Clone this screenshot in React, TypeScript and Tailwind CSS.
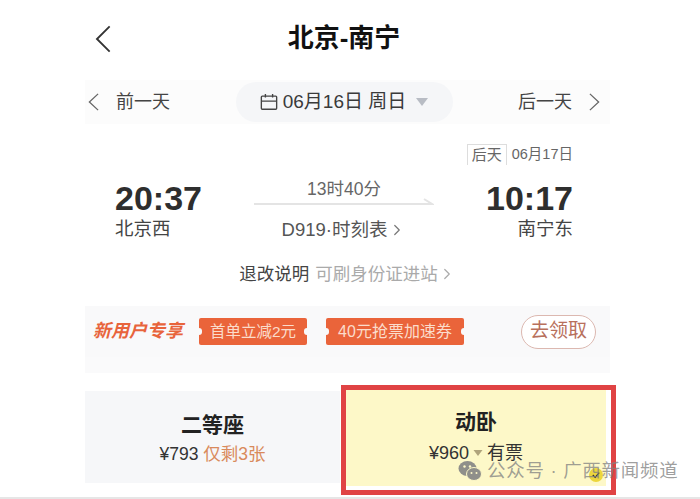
import { ChevronRight } from 'lucide-react'

const FONT = "font-['Liberation_Sans','Noto_Sans_CJK_SC',sans-serif]"

// thin chevrons of the nav row and the back button
function Arrow({ dir, className }: { dir: 'left' | 'right'; className: string }) {
  return (
    <svg viewBox="0 0 12 20" className={className} fill="none" stroke="currentColor" strokeWidth="1.4" preserveAspectRatio="none">
      <path d={dir === 'left' ? 'M11 1 1.5 10 11 19' : 'M1 1l9.5 9L1 19'} />
    </svg>
  )
}

// triangle used next to the date and the price
function Caret({ className }: { className: string }) {
  return (
    <svg viewBox="0 0 12 8" className={className}>
      <path d="M0 0h12L6 8z" fill="currentColor" />
    </svg>
  )
}

function Coupon({ text, className }: { text: string; className: string }) {
  return (
    <div className={`relative flex h-[27px] items-center justify-center rounded-[2px] bg-[#ea643a] text-[#fbdccb] ${className}`}>
      {text}
      <span className="absolute left-[-3px] top-[10px] h-[7px] w-[6px] rounded-full bg-[#f9f9fa]" />
      <span className="absolute right-[-3px] top-[10px] h-[7px] w-[6px] rounded-full bg-[#f9f9fa]" />
    </div>
  )
}

export default function App() {
  return (
    <div className={`relative h-[499px] w-[700px] overflow-hidden bg-white ${FONT}`}>
      <div className="ml-[85px] w-[525px]">
        {/* Header */}
        <div className="relative flex h-[80px] items-center justify-center pb-[4px] pr-[7px]">
          <Arrow dir="left" className="absolute left-[10px] top-[25px] h-[28px] w-[16px] text-[#333]" />
          <h1 className="text-[26px] font-bold text-[#111]">北京-南宁</h1>
        </div>

        {/* Date row */}
        <div className="flex h-[44px] items-center justify-between bg-[#fcfcfc] pl-[3px] pr-[10px] text-[#444]">
          <div className="flex items-center gap-[17px] text-[18px]">
            <Arrow dir="left" className="h-[18px] w-[11px] text-[#666]" />
            <span>前一天</span>
          </div>
          <div className="flex h-[40px] w-[217px] items-center justify-center gap-[5px] rounded-full bg-[#f5f6f8] text-[19px] text-[#3a3a3a]">
            <svg viewBox="0 0 20 20" className="h-[18px] w-[18px]" fill="none" stroke="#444" strokeWidth="1.5">
              <rect x="1.5" y="3.5" width="17" height="14.5" rx="1" />
              <path d="M1.5 9h17M6 1v4M14 1v4" />
            </svg>
            <span>06月16日&nbsp;周日</span>
            <Caret className="ml-[5px] h-[8px] w-[12px] text-[#b8bcc4]" />
          </div>
          <div className="flex items-center gap-[17px] text-[18px]">
            <span>后一天</span>
            <Arrow dir="right" className="h-[18px] w-[11px] text-[#666]" />
          </div>
        </div>

        {/* Train info */}
        <div className="flex h-[182px] flex-col pl-[30px] pr-[37px] pt-[20px]">
          <div className="flex justify-end">
            <div className="flex items-center gap-[5px] text-[14.5px] text-[#666]">
              <span className="border-x border-t border-[#ddd] px-[4px] text-[15px] leading-[20px]">后天</span>
              <span>06月17日</span>
            </div>
          </div>
          <div className="mt-[12px] flex items-start justify-between">
            <div>
              <div className="text-[34px] font-bold leading-[40px] text-[#2e2e2e]">20:37</div>
              <div className="-mt-[1px] text-[18.5px] leading-[24px] text-[#444]">北京西</div>
            </div>
            <div className="flex w-[180px] flex-col items-center text-[#666]">
              <div className="text-[17.5px] leading-[22px]">13时40分</div>
              <svg viewBox="0 0 180 8" className="-mt-[2px] h-[8px] w-[180px]" fill="none" stroke="#e4e4e4" strokeWidth="2">
                <path d="M0 6h178l-8-5" />
              </svg>
              <div className="mt-[12px] flex items-center whitespace-nowrap text-[18.5px] leading-[24px] text-[#555]">
                D919·时刻表
                <ChevronRight className="ml-[1px] h-[18px] w-[18px] text-[#777]" strokeWidth={1.6} />
              </div>
            </div>
            <div className="text-right">
              <div className="text-[34px] font-bold leading-[40px] text-[#2e2e2e]">10:17</div>
              <div className="-mt-[1px] text-[18.5px] leading-[24px] text-[#444]">南宁东</div>
            </div>
          </div>
          <div className="ml-[7px] mt-[20px] flex items-center justify-center gap-[6px] text-[17.5px] leading-[24px]">
            <span className="text-[#444]">退改说明</span>
            <span className="flex items-center text-[#aaa]">
              可刷身份证进站
              <ChevronRight className="h-[18px] w-[18px]" strokeWidth={1.6} />
            </span>
          </div>
        </div>

        {/* Promo band */}
        <div className="flex h-[51px] items-center bg-[#f9f9fa] pl-[8px] pr-[14px]">
          <span className="w-[106px] text-[18px] font-bold italic text-[#e8643c]">新用户专享</span>
          <Coupon text="首单立减2元" className="w-[108px] text-[15.5px]" />
          <div className="w-[19px]" />
          <Coupon text="40元抢票加速券" className="w-[138px] text-[16px]" />
          <div className="ml-auto flex h-[34px] w-[75px] items-center justify-center rounded-full border border-[#dcb8b0] bg-white text-[19px] text-[#b8705c]">
            去领取
          </div>
        </div>
        <div className="h-[16px] bg-[#fafafb]" />
        <div className="h-[18px]" />

        {/* Seat cards */}
        <div className="flex w-[531px]">
          <div className="mr-px flex h-[92px] w-[255px] flex-col items-center justify-center bg-[#f6f7f9]">
            <div className="text-[21px] font-bold leading-[30px] text-[#222]">二等座</div>
            <div className="mt-[3px] text-[17.5px] leading-[22px] text-[#333]">
              ¥793 <span className="text-[#d98a5c]">仅剩3张</span>
            </div>
          </div>
          <div className="-mt-[6px] h-[110px] w-[275px] shrink-0 border-[5px] border-[#e04344] bg-white pr-[5px]">
            <div className="relative flex h-[96px] flex-col items-center justify-center bg-[#fdf8c8] pb-[5px]">
              <div className="text-[21px] font-bold leading-[30px] text-[#222]">动卧</div>
              <div className="mt-[5px] flex items-center text-[18px] leading-[22px] text-[#333]">
                ¥960
                <Caret className="mx-[4px] h-[6px] w-[10px] text-[#b0a47c]" />
                有票
              </div>
              <span className="absolute bottom-[4px] right-[3px] flex h-[14px] w-[14px] items-center justify-center rounded-full bg-[#ecd63c]">
                <svg viewBox="0 0 10 10" className="h-[8px] w-[8px]" fill="none" stroke="#333" strokeWidth="1.6">
                  <path d="M1 5l3 3 5-6" />
                </svg>
              </span>
            </div>
          </div>
        </div>
      </div>

      <div className="absolute bottom-0 left-0 h-[2px] w-full bg-[#e6e6e6]" />

      {/* WeChat watermark */}
      <div className="absolute left-[458px] top-[457px] flex items-center gap-[5px] whitespace-nowrap text-[18.5px] tracking-[0.7px] text-[#808080]/75">
        <svg viewBox="0 0 24 22" className="h-[22px] w-[24px]" fill="#8f8f8a">
          <ellipse cx="9.5" cy="8.5" rx="9" ry="7.5" />
          <ellipse cx="16" cy="14" rx="7.5" ry="6.5" stroke="#fdf8c8" strokeWidth="1" />
          <circle cx="6.5" cy="6.5" r="1.2" fill="#fdf8c8" />
          <circle cx="12" cy="6.5" r="1.2" fill="#fdf8c8" />
          <circle cx="13.5" cy="13" r="1" fill="#fdf8c8" />
          <circle cx="18.5" cy="13" r="1" fill="#fdf8c8" />
        </svg>
        <span>公众号 · 广西新闻频道</span>
      </div>
    </div>
  )
}
